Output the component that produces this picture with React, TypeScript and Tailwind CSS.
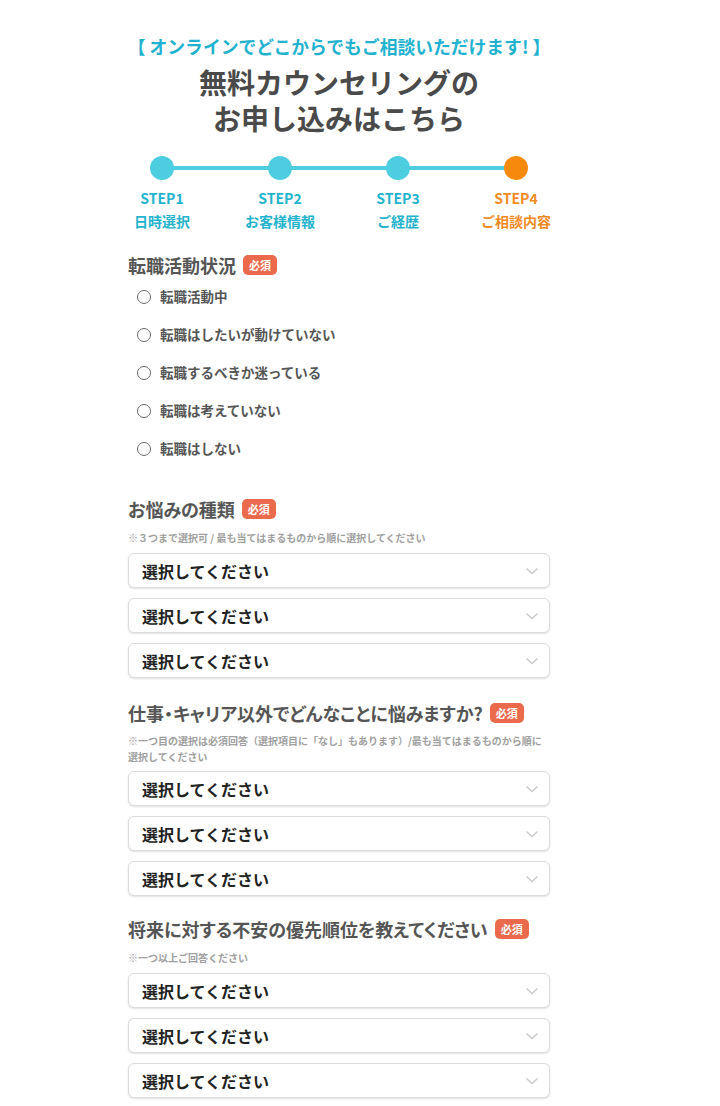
import React from "react";

const font = { fontFamily: '"Noto Sans CJK JP", "Noto Sans", sans-serif' };

function Badge() {
  return (
    <span className="ml-[7px] inline-flex h-[20px] items-center rounded-[5px] bg-[#ec6a4c] px-[6px] text-[11px] font-bold leading-none text-white">
      必須
    </span>
  );
}

function Chevron() {
  return (
    <svg width="14" height="14" viewBox="0 0 14 14" fill="none">
      <path d="M1.5 4.5 L7 9.5 L12.5 4.5" stroke="#c8c8c8" strokeWidth="1.3" />
    </svg>
  );
}

function Select() {
  return (
    <div className="flex h-[35px] items-center justify-between rounded-[6px] border border-[#dcdcdc] bg-white pl-[13px] pr-[10px] shadow-[0_1px_2px_rgba(0,0,0,0.12)]">
      <span className="text-[16px] font-bold text-[#222]">選択してください</span>
      <Chevron />
    </div>
  );
}

function Heading({ children }: { children: React.ReactNode }) {
  return (
    <div className="flex items-center">
      <span className="text-[18px] font-bold leading-[24px] text-[#555] [font-feature-settings:'palt']">{children}</span>
      <Badge />
    </div>
  );
}

const steps = [
  { s: "STEP1", l: "日時選択", active: false },
  { s: "STEP2", l: "お客様情報", active: false },
  { s: "STEP3", l: "ご経歴", active: false },
  { s: "STEP4", l: "ご相談内容", active: true },
];

const radios = ["転職活動中", "転職はしたいが動けていない", "転職するべきか迷っている", "転職は考えていない", "転職はしない"];

export default function App() {
  return (
    <div className="min-h-[1106px] bg-white" style={font}>
      <div className="ml-[128px] w-[422px] pt-[34px]">
        <div className="-mx-[10px] text-center text-[17.8px] font-bold leading-[24px] text-[#22b2d0]">
          【 オンラインでどこからでもご相談いただけます! 】
        </div>
        <div className="mt-[6px] text-center text-[28px] font-bold leading-[36px] text-[#4a4a4a]">
          無料カウンセリングの
          <br />
          お申し込みはこちら
        </div>

        <div className="relative -mx-[25px] mt-[20px]">
          <div className="absolute left-[59px] right-[59px] top-[10px] h-[4px] bg-[#4fcde0]" />
          <div className="relative grid grid-cols-4">
            {steps.map((st) => (
              <div key={st.s} className="flex flex-col items-center">
                <div className={`h-[24px] w-[24px] rounded-full ${st.active ? "bg-[#f7890c]" : "bg-[#4fcde0]"}`} />
                <div className={`mt-[7px] text-[14px] font-bold leading-[22px] ${st.active ? "text-[#f38a1f]" : "text-[#24b3cd]"}`}>
                  {st.s}
                </div>
                <div className={`mt-[1px] text-[14px] font-bold leading-[22px] ${st.active ? "text-[#f38a1f]" : "text-[#24b3cd]"}`}>
                  {st.l}
                </div>
              </div>
            ))}
          </div>
        </div>

        <div className="mt-[21px]">
          <Heading>転職活動状況</Heading>
          <div className="mt-[9px] flex flex-col gap-[17px] pl-[9px]">
            {radios.map((r) => (
              <div key={r} className="flex h-[21px] items-center">
                <span className="h-[14px] w-[14px] rounded-full border border-[#6a6a6a] bg-white" />
                <span className="ml-[9px] text-[13.5px] font-bold text-[#555]">{r}</span>
              </div>
            ))}
          </div>
        </div>

        <div className="mt-[38px]">
          <Heading>お悩みの種類</Heading>
          <div className="mt-[9px] text-[10px] font-bold leading-[16px] text-[#a0a0a0]">
            ※３つまで選択可 / 最も当てはまるものから順に選択してください
          </div>
          <div className="mt-[7px] flex flex-col gap-[10px]">
            <Select />
            <Select />
            <Select />
          </div>
        </div>

        <div className="mt-[23px]">
          <Heading>仕事・キャリア以外でどんなことに悩みますか?</Heading>
          <div className="mt-[8px] text-[10px] font-bold leading-[16px] text-[#a0a0a0]">
            ※一つ目の選択は必須回答（選択項目に「なし」もあります）/最も当てはまるものから順に選択してください
          </div>
          <div className="mt-[6px] flex flex-col gap-[10px]">
            <Select />
            <Select />
            <Select />
          </div>
        </div>

        <div className="mt-[21px]">
          <Heading>将来に対する不安の優先順位を教えてください</Heading>
          <div className="mt-[9px] text-[10px] font-bold leading-[16px] text-[#a0a0a0]">※一つ以上ご回答ください</div>
          <div className="mt-[7px] flex flex-col gap-[10px]">
            <Select />
            <Select />
            <Select />
          </div>
        </div>
      </div>
    </div>
  );
}
